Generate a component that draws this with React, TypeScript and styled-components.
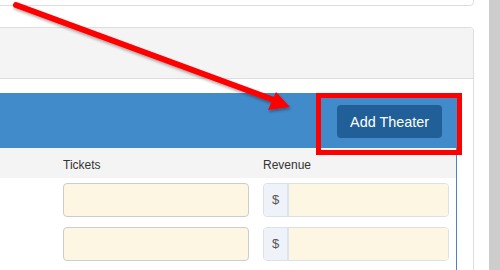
import styled, { createGlobalStyle } from 'styled-components';

// Screenshot of an admin panel: "Add Theater" toolbar with an annotation arrow + box on top.
const GlobalStyle = createGlobalStyle`
  html, body {
    margin: 0;
    padding: 0;
    background: #fff;
    overflow: hidden;
  }
  body {
    font-family: "Liberation Sans", Arial, sans-serif;
    color: #333;
  }
`;

const rows = [0, 1, 2];

export default function App() {
  return (
    <>
      <GlobalStyle />
      <Page>
        <Content>
          <TopPanel />
          <Panel>
            <PanelHeading />
            <PanelBody>
              <Toolbar>
                <AddButton type="button">Add Theater</AddButton>
                <Highlight />
              </Toolbar>
              <Table>
                <HeadRow>
                  <span />
                  <HeadCell>Tickets</HeadCell>
                  <HeadCell>Revenue</HeadCell>
                </HeadRow>
                {rows.map((r) => (
                  <BodyRow key={r}>
                    <span />
                    <TicketInput />
                    <MoneyGroup>
                      <Addon>$</Addon>
                      <MoneyInput />
                    </MoneyGroup>
                  </BodyRow>
                ))}
              </Table>
            </PanelBody>
          </Panel>
        </Content>
        <Scrollbar />
        {/* annotation arrow drawn over the screenshot */}
        <Arrow width="500" height="270" viewBox="0 0 500 270">
          <defs>
            <filter id="shadow" x="-10%" y="-10%" width="120%" height="130%">
              <feDropShadow dx="1" dy="2" stdDeviation="1.5" floodColor="#000" floodOpacity="0.35" />
            </filter>
          </defs>
          <g filter="url(#shadow)">
            <line x1="16" y1="5" x2="274" y2="100" stroke="#ff0000" strokeWidth="6" strokeLinecap="round" />
            <polygon points="290,107 268,110 276,92" fill="#ff0000" />
          </g>
        </Arrow>
      </Page>
    </>
  );
}

const Page = styled.div`
  position: relative;
  display: flex;
  width: 500px;
  height: 270px;
  overflow: hidden;
`;

const Content = styled.div`
  flex: 1;
  display: flex;
  flex-direction: column;
  gap: 21px;
  margin-left: -20px;
  padding-right: 15px;

  & > * {
    flex-shrink: 0;
  }
`;

const TopPanel = styled.div`
  height: 24px;
  margin-top: -20px;
  border: 1px solid #ddd;
  border-radius: 4px;
  background: #fff;
`;

const Panel = styled.div`
  border: 1px solid #ddd;
  border-radius: 4px;
  background: #fff;
`;

const PanelHeading = styled.div`
  height: 50px;
  background: #f4f4f4;
  border-bottom: 1px solid #ddd;
  border-radius: 4px 4px 0 0;
`;

const PanelBody = styled.div`
  padding: 14px 16px 0 5px;
`;

const Toolbar = styled.div`
  position: relative;
  display: flex;
  justify-content: flex-end;
  height: 55px;
  padding: 12px 15px 0 0;
  box-sizing: border-box;
  background: #428bca;
`;

const AddButton = styled.button`
  height: 33px;
  padding: 0 13px;
  border: none;
  border-radius: 4px;
  background: #215f98;
  color: #fff;
  font-family: "Liberation Sans", Arial, sans-serif;
  font-size: 14.4px;
`;

// red annotation box around the button
const Highlight = styled.div`
  position: absolute;
  top: 0;
  right: -5px;
  width: 146px;
  height: 62px;
  box-sizing: border-box;
  border: 5px solid #ff0000;
`;

const Table = styled.div`
  border-right: 1px solid #4a84c0;
  padding-right: 7px;
  height: 200px;
`;

const HeadRow = styled.div`
  display: grid;
  grid-template-columns: 1fr 186px 186px;
  column-gap: 14px;
  height: 30px;
  margin-right: -7px;
  padding-right: 7px;
  background: #f4f4f4;
  font-size: 12px;
  line-height: 34px;
`;

const HeadCell = styled.div`
  color: #333;
`;

const BodyRow = styled.div`
  display: grid;
  grid-template-columns: 1fr 186px 186px;
  column-gap: 14px;
  margin: 5px 0 10px;
  height: 34px;
`;

const TicketInput = styled.div`
  box-sizing: border-box;
  border: 1px solid #ccc;
  border-radius: 4px;
  background: #fcf6e2;
`;

const MoneyGroup = styled.div`
  display: flex;
  box-sizing: border-box;
  border: 1px solid #d9e2ec;
  border-radius: 4px;
  overflow: hidden;
`;

const Addon = styled.div`
  width: 25px;
  display: flex;
  align-items: flex-start;
  justify-content: center;
  padding-top: 8px;
  box-sizing: border-box;
  background: #eff3f9;
  border-right: 2px solid #dbe5f0;
  color: #555;
  font-size: 13px;
  line-height: 15px;
`;

const MoneyInput = styled.div`
  flex: 1;
  background: #fcf6e2;
`;

const Scrollbar = styled.div`
  width: 11px;
  background: #cdcdcd;
`;

const Arrow = styled.svg`
  position: absolute;
  inset: 0;
  pointer-events: none;
`;
